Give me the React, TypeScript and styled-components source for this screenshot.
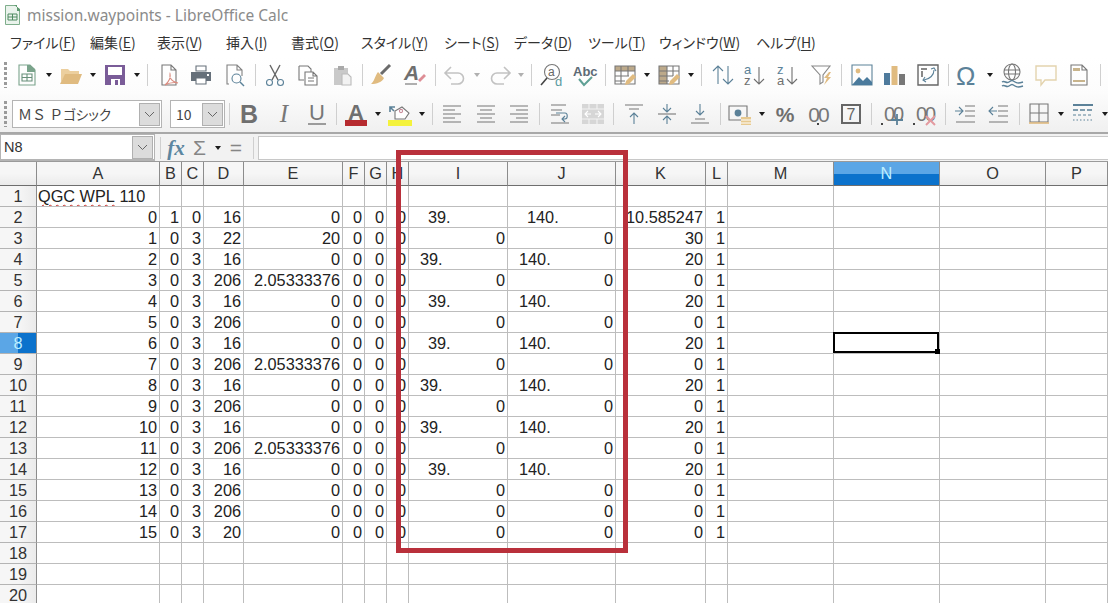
import React from 'react';
import styled, { createGlobalStyle } from 'styled-components';

const GlobalStyle = createGlobalStyle`
  html, body { margin: 0; padding: 0; background: #fff; overflow: hidden; }
  body { font-family: "Noto Sans", "Noto Sans CJK JP", sans-serif; }
`;

const Window = styled.div`
  position: relative;
  width: 1108px;
  height: 603px;
  display: flex;
  flex-direction: column;
  overflow: hidden;
  background: #fff;
`;

const TitleBar = styled.div`
  height: 30px;
  flex: none;
  display: flex;
  align-items: center;
  gap: 7px;
  padding-left: 5px;
  box-sizing: border-box;
  color: #8b8b8b;
  font-size: 15.5px;
`;

const MenuBar = styled.div`
  height: 27px;
  flex: none;
  display: flex;
  align-items: center;
  padding: 0 0 3px 10px;
  box-sizing: border-box;
  color: #333;
  font-family: "Noto Sans CJK JP", sans-serif;
  font-size: 14px;
  font-feature-settings: "palt";
`;

const MenuItem = styled.span<{ $w: number }>`
  width: ${(p) => p.$w}px;
  flex: none;
  white-space: nowrap;
  & u { text-underline-offset: 2px; }
`;

const Toolbar = styled.div<{ $h: number; $last?: boolean }>`
  height: ${(p) => p.$h}px;
  flex: none;
  display: flex;
  align-items: center;
  box-sizing: border-box;
  padding-top: ${(p) => (p.$last ? 3 : 0)}px;
  background: ${(p) => (p.$last ? 'linear-gradient(#fcfcfc, #f0f0f0)' : 'linear-gradient(#ffffff, #fcfcfc)')};
  border-bottom: ${(p) => (p.$last ? '2px solid #a8a8a8' : 'none')};
`;

const Slot = styled.div<{ $ml: number; $w: number }>`
  flex: none;
  margin-left: ${(p) => p.$ml}px;
  width: ${(p) => p.$w}px;
  display: flex;
  align-items: center;
  justify-content: center;
`;

const Grip = styled.div`
  width: 3px;
  height: 26px;
  background: repeating-linear-gradient(#9a9a9a 0 3px, transparent 3px 5px);
`;

const Sep = styled.div`
  width: 1px;
  height: 22px;
  background: #cfcfcf;
`;

const Arrow = styled.div<{ $off?: boolean }>`
  width: 0;
  height: 0;
  border-left: 3.5px solid transparent;
  border-right: 3.5px solid transparent;
  border-top: 4px solid ${(p) => (p.$off ? '#b0b0b0' : '#1c1c1c')};
`;

const Combo = styled.div<{ $w: number }>`
  width: ${(p) => p.$w}px;
  height: 28px;
  box-sizing: border-box;
  display: flex;
  align-items: center;
  padding: 1px 1px 1px 5px;
  background: #fff;
  border: 1px solid #b4b4b4;
  color: #444;
  font-family: "Noto Sans CJK JP", sans-serif;
  font-size: 14px;
  white-space: pre;
`;

const ComboText = styled.span`
  flex: 1;
  & b {
    font-weight: 400;
    font-size: 13.5px;
    font-feature-settings: "palt";
  }
`;

const ComboButton = styled.div`
  width: 21px;
  height: 23px;
  flex: none;
  display: flex;
  align-items: center;
  justify-content: center;
  background: #dcdcdc;
  border: 1px solid #b0b0b0;
  box-sizing: border-box;
`;

const FormulaBar = styled.div`
  height: 27px;
  flex: none;
  display: flex;
  align-items: stretch;
  background: #f2f2f2;
`;

const NameBox = styled.div`
  width: 155px;
  flex: none;
  box-sizing: border-box;
  display: flex;
  align-items: center;
  justify-content: space-between;
  padding: 1px 1px 1px 3px;
  background: #fff;
  border: 1px solid #b4b4b4;
  border-bottom-width: 2px;
  color: #333;
  font-family: "Liberation Sans", sans-serif;
  font-size: 14.5px;
`;

const FormulaTools = styled.div`
  width: 103px;
  flex: none;
  display: flex;
  align-items: center;
`;

const FormulaInput = styled.div`
  flex: 1;
  background: #fff;
  border: 1px solid #c8c8c8;
  border-right: none;
  margin: 2px 0 1px;
`;

const FxLabel = styled.span`
  color: #5c86a0;
  font-family: "Liberation Serif", serif;
  font-style: italic;
  font-weight: bold;
  font-size: 21px;
  line-height: 24px;
`;

const FormulaGlyph = styled.span`
  color: #858585;
  font-family: "Liberation Sans", sans-serif;
  font-size: 21px;
  line-height: 24px;
`;

const Sheet = styled.div`
  flex: none;
  display: grid;
  grid-template-columns: 37px 123px 22px 22px 40px 99px 22px 22px 22px 99px 108px 90px 22px 106px 106px 106px 62px;
  grid-template-rows: 24px repeat(20, 21px);
  border-top: 1px solid #9a9a9a;
  font-family: "Liberation Sans", sans-serif;
  font-size: 16.3px;
  color: #222;
`;

const ColHead = styled.div<{ $on?: boolean }>`
  display: flex;
  align-items: center;
  justify-content: center;
  box-sizing: border-box;
  color: ${(p) => (p.$on ? '#bdeeff' : '#333')};
  background: ${(p) => (p.$on
    ? 'linear-gradient(#5ba6e6 0 50%, #0b72cc 50% 100%)'
    : 'linear-gradient(#f6f6f6 0 50%, #ebebeb 100%)')};
  border-right: 1px solid #8c8c8c;
  border-bottom: 1px solid #6e6e6e;
`;

const RowHead = styled.div<{ $on?: boolean }>`
  display: flex;
  align-items: center;
  justify-content: center;
  box-sizing: border-box;
  color: ${(p) => (p.$on ? '#bdeeff' : '#333')};
  background: ${(p) => (p.$on
    ? 'linear-gradient(90deg, #5ba6e6 0 50%, #0b72cc 50% 100%)'
    : 'linear-gradient(90deg, #f6f6f6 0 50%, #ebebeb 100%)')};
  border-right: 1px solid #8c8c8c;
  border-bottom: 1px solid #b4b4b4;
`;

const Cell = styled.div<{ $left?: boolean; $pad?: number }>`
  box-sizing: border-box;
  display: flex;
  align-items: center;
  justify-content: ${(p) => (p.$left || p.$pad ? 'flex-start' : 'flex-end')};
  padding: 0 2px 0 ${(p) => p.$pad ?? 1}px;
  border-right: 1px solid #bdbdbd;
  border-bottom: 1px solid #bdbdbd;
  white-space: nowrap;
  overflow: hidden;
  & i {
    font-style: normal;
    text-decoration: underline wavy #c8322d 1px;
    text-underline-offset: 2px;
  }
`;

const ActiveCell = styled(Cell)`
  position: relative;
  overflow: visible;
  z-index: 1;
`;

const CellCursor = styled.div`
  position: absolute;
  left: -1px;
  top: -1px;
  right: 0;
  bottom: 0;
  border: 2px solid #000;
`;

const Handle = styled.div`
  position: absolute;
  right: -1px;
  bottom: -1px;
  width: 5px;
  height: 5px;
  background: #000;
`;

const RedFrame = styled.div`
  position: absolute;
  left: 396px;
  top: 150px;
  width: 232px;
  height: 403px;
  box-sizing: border-box;
  border: 5px solid #b9303b;
  pointer-events: none;
  z-index: 2;
`;

const BLUE = '#5b8198';
const GREY = '#6f6f6f';
const TAN = '#e0bb80';
const LINE = '#777';

const Svg: React.FC<{ children: React.ReactNode }> = ({ children }) => (
  <svg width={24} height={24} viewBox="0 0 24 24" fill="none" strokeWidth={1.1} overflow="visible">
    {children}
  </svg>
);

const lines = (rows: [number, number, number][], color = LINE) => (
  <path stroke={color} d={rows.map(([a, b, y]) => `M${a} ${y}H${b}`).join('')} />
);

const icons: Record<string, React.ReactNode> = {
  newSheet: (
    <Svg>
      <path d="M4 2h11l5 5v15H4z" stroke="#7aa38b" />
      <path d="M15 2h-3v7h8V6z" fill="#7aa38b" />
      <path d="M7 11h10v7H7zM7 14.5h10M12 11v7" stroke="#68907a" />
    </Svg>
  ),
  open: (
    <Svg>
      <path d="M2 19V6h7l2 2h9v3H7z" fill="#eccf9e" />
      <path d="M1 21l5-10h17l-4 10z" fill={TAN} />
    </Svg>
  ),
  save: (
    <Svg>
      <path d="M2 2h20v20H2z" fill="#7a5c98" />
      <path d="M5 4h14v8H5z" fill="#fff" />
      <path d="M8 16h9v6H8z" fill="#fff" />
      <path d="M12 17h3v5h-3z" fill="#7a5c98" />
    </Svg>
  ),
  pdf: (
    <Svg>
      <path d="M5 2h9l5 5v15H5zM14 2v5h5" stroke="#777" />
      <path d="M8 22c4-3 6-8 5-11-1 4 2 8 8 9-4-1-9 0-13 2z" stroke="#d98b7f" fill="#fff" />
    </Svg>
  ),
  print: (
    <Svg>
      <path d="M7 3h10v5H7z" stroke="#66707a" fill="#fff" />
      <path d="M2 9h20v9H2z" fill="#66707a" />
      <path d="M7 15h10v6H7z" fill="#fff" stroke="#66707a" />
      <path d="M18 11h2v2h-2z" fill="#fff" />
    </Svg>
  ),
  preview: (
    <Svg>
      <path d="M6 21H4V2h10l5 5v6M14 2v5h5" stroke="#808080" />
      <circle cx="13.5" cy="15.5" r="4.5" stroke={BLUE} />
      <path d="M17 19l4 4" stroke={BLUE} strokeWidth={1.5} />
    </Svg>
  ),
  cut: (
    <Svg>
      <path d="M7 2l8 15M17 2L9 17" stroke="#666" strokeWidth={1.4} />
      <circle cx="6.5" cy="19.5" r="3" stroke={BLUE} />
      <circle cx="17.5" cy="19.5" r="3" stroke={BLUE} />
    </Svg>
  ),
  copy: (
    <Svg>
      <path d="M3 3h9l3 3v3M3 3v14h5" stroke="#777" />
      <path d="M9 9h8l4 4v9H9zM17 9v4h4M12 15h6M12 18h6" stroke="#777" fill="#fff" />
    </Svg>
  ),
  paste: (
    <Svg>
      <path d="M4 5h14v17H4z" fill="#c9c9c9" />
      <path d="M8 3h6v4H8z" fill="#a9a9a9" />
      <path d="M12 11h6l3 3v8h-9z" fill="#f2f2f2" stroke="#bbb" />
    </Svg>
  ),
  brush: (
    <Svg>
      <path d="M21 2L12 11" stroke="#6b6b6b" strokeWidth={3} />
      <path d="M9 9l6 6c-2 4-7 6-13 6 3-2 4-8 7-12z" fill={TAN} />
    </Svg>
  ),
  clearFmt: (
    <Svg>
      <text x="1" y="17" fontFamily="Liberation Sans" fontStyle="italic" fontWeight="bold" fontSize="21" fill={GREY}>A</text>
      <path d="M2 21h12" stroke={GREY} />
      <path d="M15 17l6-6 2 2-6 6z" fill="#dd8d95" />
    </Svg>
  ),
  undo: (
    <Svg>
      <path d="M3 10h12a5.5 5.5 0 010 11H8M8 4l-6 6 6 6" stroke="#c2c2c2" strokeWidth={1.6} />
    </Svg>
  ),
  redo: (
    <Svg>
      <path d="M21 10H9a5.5 5.5 0 000 11h7M16 4l6 6-6 6" stroke="#c2c2c2" strokeWidth={1.6} />
    </Svg>
  ),
  find: (
    <Svg>
      <circle cx="12" cy="9" r="7.5" stroke="#777" />
      <text x="8" y="13" fontFamily="Liberation Sans" fontSize="12" fill="#666">a</text>
      <path d="M7 15l-6 7" stroke="#444" strokeWidth={1.6} />
      <text x="15" y="23" fontFamily="Liberation Sans" fontSize="13" fill="#5a9aa0">d</text>
    </Svg>
  ),
  abc: (
    <Svg>
      <text x="0" y="13" fontFamily="Liberation Sans" fontWeight="bold" fontSize="13" fill="#5d6a75">Abc</text>
      <path d="M6 16l5 6 8-8" stroke="#5fa095" strokeWidth={2} />
    </Svg>
  ),
  tableEdit: (
    <Svg>
      <path d="M2 3h20v5H2z" fill="#bca98a" />
      <path d="M2 3h20v18H2zM2 8h20M2 13h14M2 18h10M8 3v18M15 3v10" stroke="#777" />
      <path d="M12 22l1-4 7-7 3 3-7 7z" fill={TAN} />
    </Svg>
  ),
  colEdit: (
    <Svg>
      <path d="M2 3h8v18H2z" fill="#bca98a" />
      <path d="M2 3h20v18H2zM2 8h20M2 13h14M2 18h10M10 3v18M16 3v10" stroke="#777" />
      <path d="M12 22l1-4 7-7 3 3-7 7z" fill={TAN} />
    </Svg>
  ),
  sort: (
    <Svg>
      <path d="M7 21V3M2 8l5-5 5 5M17 3v18M12 16l5 5 5-5" stroke={BLUE} />
    </Svg>
  ),
  sortAz: (
    <Svg>
      <text fontFamily="Liberation Sans" fontSize="13">
        <tspan x="1" y="11" fill={BLUE}>a</tspan>
        <tspan x="1" y="22" fill={GREY}>z</tspan>
      </text>
      <path d="M16 21V4M11 16l5 5 5-5" stroke={GREY} />
    </Svg>
  ),
  sortZa: (
    <Svg>
      <text fontFamily="Liberation Sans" fontSize="13">
        <tspan x="1" y="11" fill={BLUE}>z</tspan>
        <tspan x="1" y="22" fill={GREY}>a</tspan>
      </text>
      <path d="M16 21V4M11 16l5 5 5-5" stroke={GREY} />
    </Svg>
  ),
  filter: (
    <Svg>
      <path d="M2 3h18l-7 9v7l-3 2v-9z" stroke="#888" />
      <path d="M19 9l-5 6h3l-3 7 7-8h-3l3-5z" fill={TAN} />
    </Svg>
  ),
  image: (
    <Svg>
      <path d="M2 2h20v20H2z" stroke={BLUE} />
      <circle cx="8" cy="8" r="2.4" fill={TAN} />
      <path d="M2 22l7-8 4 4 4-4 5 5v3z" fill="#4a7a9c" />
    </Svg>
  ),
  chart: (
    <Svg>
      <path d="M2 10h6v12H2z" fill="#4e7a9c" />
      <path d="M9.5 3h6v19h-6z" fill={TAN} />
      <path d="M17 11h6v11h-6z" fill="#777" />
    </Svg>
  ),
  pivot: (
    <Svg>
      <path d="M2 2h20v20H2z" stroke="#666" strokeWidth={1.4} />
      <path d="M5 5h6v2H5zM5 8h2v6H5z" fill="#888" />
      <path d="M18 7c0 5-4 9-10 10M15 6l3-1 2 3M9 14l-2 3 3 2" stroke={BLUE} />
    </Svg>
  ),
  omega: (
    <Svg>
      <text x="0" y="22" fontFamily="Liberation Sans" fontSize="26" fill={BLUE}>Ω</text>
    </Svg>
  ),
  link: (
    <Svg>
      <circle cx="11" cy="9" r="8" stroke="#777" />
      <ellipse cx="11" cy="9" rx="3.5" ry="8" stroke="#777" />
      <path d="M3 7h16M3 11h16" stroke="#777" />
      <path d="M1 19c3-2 4 2 7 0s3-2 6 0 5 1 8 0M1 23c3-2 4 2 7 0s3-2 6 0 5 1 8 0" stroke={BLUE} strokeWidth={1.5} />
    </Svg>
  ),
  comment: (
    <Svg>
      <path d="M2 3h20v14H11l-4 5v-5H2z" stroke="#e3d3ae" strokeWidth={1.4} />
    </Svg>
  ),
  header: (
    <Svg>
      <path d="M4 2h11l5 5v15H4zM15 2v5h5" stroke="#777" />
      <path d="M6 5h7v3H6z" fill="#c8b48c" />
      <path d="M6 17h12v2H6z" fill="#c8b48c" />
    </Svg>
  ),
  bold: (
    <Svg>
      <text x="12" y="21" textAnchor="middle" fontFamily="Liberation Sans" fontWeight="bold" fontSize="25" fill={GREY}>B</text>
    </Svg>
  ),
  italic: (
    <Svg>
      <text x="12" y="20" textAnchor="middle" fontFamily="Liberation Serif" fontStyle="italic" fontSize="25" fill="#777">I</text>
    </Svg>
  ),
  underline: (
    <Svg>
      <text x="12" y="18" textAnchor="middle" fontFamily="Liberation Sans" fontSize="22" fill="#777">U</text>
      <path d="M3 22h18" stroke="#555" />
    </Svg>
  ),
  fontColor: (
    <Svg>
      <text x="12" y="18" textAnchor="middle" fontFamily="Liberation Sans" fontWeight="bold" fontSize="22" fill={GREY}>A</text>
      <path d="M1 18h22v6H1z" fill="#b62b2f" />
    </Svg>
  ),
  bgColor: (
    <Svg>
      <path d="M7 17V9l7-4 7 6-4 6z" stroke="#777" fill="#fff" />
      <path d="M2 10V5h5M2 5l4 4" stroke={BLUE} strokeWidth={1.6} />
      <circle cx="13" cy="9" r="1.6" stroke="#c98b9a" />
      <path d="M0 18h24v6H0z" fill="#f4f23c" />
    </Svg>
  ),
  alignLeft: <Svg>{lines([[3, 21, 4], [3, 15, 8], [3, 21, 12], [3, 15, 16], [3, 21, 20]])}</Svg>,
  alignCenter: <Svg>{lines([[3, 21, 4], [6, 18, 8], [3, 21, 12], [6, 18, 16], [3, 21, 20]])}</Svg>,
  alignRight: <Svg>{lines([[3, 21, 4], [9, 21, 8], [3, 21, 12], [9, 21, 16], [3, 21, 20]])}</Svg>,
  wrap: (
    <Svg>
      {lines([[3, 18, 3], [3, 14, 8], [3, 12, 13], [3, 21, 21]])}
      <path d="M8 11h9c3 0 3 6 0 6h-3M17 14l-3 3 3 3" stroke={BLUE} />
    </Svg>
  ),
  merge: (
    <Svg>
      <path d="M1 2h22v20H1z" fill="#d6d6d6" />
      <path d="M1 7h22M1 17h22M8 2v5M16 2v5M8 17v5M16 17v5" stroke="#f2f2f2" />
      <path d="M4 12h6M7 9l-3 3 3 3M20 12h-6M17 9l3 3-3 3" stroke="#fff" />
    </Svg>
  ),
  vTop: (
    <Svg>
      {lines([[3, 21, 3], [7, 17, 7]])}
      <path d="M12 22V11M8 15l4-4 4 4" stroke={BLUE} />
    </Svg>
  ),
  vMid: (
    <Svg>
      {lines([[3, 21, 12]])}
      <path d="M12 2v8M8 6l4 4 4-4M12 22v-8M8 18l4-4 4 4" stroke={BLUE} />
    </Svg>
  ),
  vBottom: (
    <Svg>
      {lines([[3, 21, 21], [7, 17, 17]])}
      <path d="M12 2v11M8 9l4 4 4-4" stroke={BLUE} />
    </Svg>
  ),
  currency: (
    <Svg>
      <path d="M1 4h18v14H1z" stroke="#777" />
      <circle cx="10" cy="11" r="3.4" fill={BLUE} />
      <path d="M13 15h10v8H13z" fill="#e7c98f" />
      <path d="M13 18h10M13 21h10" stroke="#fff" />
    </Svg>
  ),
  percent: (
    <Svg>
      <text x="12" y="20" textAnchor="middle" fontFamily="Liberation Sans" fontWeight="bold" fontSize="21" fill={GREY}>%</text>
    </Svg>
  ),
  decimal: (
    <Svg>
      <text x="12" y="20" textAnchor="middle" fontFamily="Liberation Sans" fontSize="21" letterSpacing="-2" fill="#777">00</text>
      <path d="M11 21h2v2h-2z" fill="#444" />
    </Svg>
  ),
  seven: (
    <Svg>
      <path d="M3 3h18v18H3z" stroke="#666" strokeWidth={2} />
      <text x="12" y="18" textAnchor="middle" fontFamily="Liberation Sans" fontSize="16" fill="#666">7</text>
    </Svg>
  ),
  addDec: (
    <Svg>
      <text x="13" y="19" textAnchor="middle" fontFamily="Liberation Sans" fontSize="20" letterSpacing="-2" fill="#777">00</text>
      <path d="M1 21h2v2H1z" fill="#444" />
      <path d="M17 12v11M11 18h12" stroke={BLUE} strokeWidth={1.8} />
    </Svg>
  ),
  delDec: (
    <Svg>
      <text x="12" y="19" textAnchor="middle" fontFamily="Liberation Sans" fontSize="20" letterSpacing="-2" fill="#777">00</text>
      <path d="M0 21h2v2H0z" fill="#444" />
      <path d="M13 14l9 9M22 14l-9 9" stroke="#e39aa0" strokeWidth={2} />
    </Svg>
  ),
  indent: (
    <Svg>
      {lines([[12, 22, 4], [12, 22, 9], [12, 22, 14], [3, 22, 20]])}
      <path d="M2 9h8M6 5l4 4-4 4" stroke={BLUE} />
    </Svg>
  ),
  outdent: (
    <Svg>
      {lines([[12, 22, 4], [12, 22, 9], [12, 22, 14], [3, 22, 20]])}
      <path d="M11 9H3M7 5L3 9l4 4" stroke={BLUE} />
    </Svg>
  ),
  borders: (
    <Svg>
      <path d="M3 2h18v18H3zM12 2v18M3 11h18" stroke="#777" />
      <path d="M2 21h20" stroke={TAN} strokeWidth={1.6} />
    </Svg>
  ),
  borderStyle: (
    <Svg>
      <path d="M2 3h20" stroke={BLUE} strokeWidth={2} />
      <path d="M2 8h20" stroke={BLUE} strokeWidth={1.4} strokeDasharray="5 2" />
      <path d="M2 13h20" stroke={BLUE} strokeWidth={1.2} strokeDasharray="3 2" />
      <path d="M2 18h20" stroke={BLUE} strokeWidth={1.2} strokeDasharray="1.5 2" />
    </Svg>
  ),
};

const Chevron = () => (
  <svg width="11" height="7" viewBox="0 0 11 7" fill="none">
    <path d="M1 1l4.5 4.5L10 1" stroke="#666" />
  </svg>
);

type Item =
  | { kind: 'grip' | 'sep' | 'arrow' | 'off'; at: number }
  | { kind: 'icon'; at: number; name: string }
  | { kind: 'combo'; at: number; w: number; text: React.ReactNode };

const itemWidth = (i: Item) => {
  if (i.kind === 'icon') return 24;
  if (i.kind === 'combo') return i.w;
  if (i.kind === 'grip') return 3;
  if (i.kind === 'sep') return 1;
  return 7;
};

const icon = (at: number, name: string): Item => ({ kind: 'icon', at, name });
const arrow = (at: number): Item => ({ kind: 'arrow', at });
const off = (at: number): Item => ({ kind: 'off', at });
const sep = (at: number): Item => ({ kind: 'sep', at });
const grip = (at: number): Item => ({ kind: 'grip', at });

const topTools: Item[] = [
  grip(5), icon(27, 'newSheet'), arrow(49), icon(71, 'open'), arrow(93), icon(115, 'save'), arrow(137), sep(147),
  icon(169, 'pdf'), icon(201, 'print'), icon(235, 'preview'), sep(255),
  icon(275, 'cut'), icon(308, 'copy'), icon(342, 'paste'), sep(362),
  icon(381, 'brush'), icon(415, 'clearFmt'), sep(435),
  icon(455, 'undo'), off(477), icon(500, 'redo'), off(521), sep(531),
  icon(552, 'find'), icon(585, 'abc'), sep(605),
  icon(625, 'tableEdit'), arrow(647), icon(669, 'colEdit'), arrow(691), sep(701),
  icon(723, 'sort'), icon(755, 'sortAz'), icon(788, 'sortZa'), icon(822, 'filter'), sep(841),
  icon(862, 'image'), icon(894, 'chart'), icon(928, 'pivot'), sep(948),
  icon(968, 'omega'), arrow(990), icon(1013, 'link'), icon(1046, 'comment'), icon(1079, 'header'), sep(1100),
];

const formatTools: Item[] = [
  grip(5),
  { kind: 'combo', at: 87, w: 150, text: <>ＭＳ Ｐ<b>ゴシック</b></> },
  { kind: 'combo', at: 197.5, w: 55, text: '10' },
  sep(229),
  icon(249, 'bold'), icon(284, 'italic'), icon(317, 'underline'), sep(336),
  icon(356, 'fontColor'), arrow(378), icon(400, 'bgColor'), arrow(422), sep(432),
  icon(452, 'alignLeft'), icon(486, 'alignCenter'), icon(519, 'alignRight'), sep(539),
  icon(560, 'wrap'), icon(593, 'merge'), sep(613),
  icon(634, 'vTop'), icon(667, 'vMid'), icon(700, 'vBottom'), sep(720),
  icon(740, 'currency'), arrow(762), icon(785, 'percent'), icon(818, 'decimal'), icon(851, 'seven'), sep(871),
  icon(892, 'addDec'), icon(925, 'delDec'), sep(945),
  icon(965, 'indent'), icon(998, 'outdent'), sep(1019),
  icon(1039, 'borders'), arrow(1061), icon(1083, 'borderStyle'), arrow(1105),
];

const ToolRow: React.FC<{ items: Item[]; h: number; last?: boolean }> = ({ items, h, last }) => {
  let end = 0;
  return (
    <Toolbar $h={h} $last={last}>
      {items.map((item) => {
        const w = itemWidth(item);
        const ml = item.at - w / 2 - end;
        end = item.at + w / 2;
        return (
          <Slot key={item.at} $ml={ml} $w={w}>
            {item.kind === 'icon' && icons[item.name]}
            {item.kind === 'arrow' && <Arrow />}
            {item.kind === 'off' && <Arrow $off />}
            {item.kind === 'sep' && <Sep />}
            {item.kind === 'grip' && <Grip />}
            {item.kind === 'combo' && (
              <Combo $w={item.w}>
                <ComboText>{item.text}</ComboText>
                <ComboButton><Chevron /></ComboButton>
              </Combo>
            )}
          </Slot>
        );
      })}
    </Toolbar>
  );
};

const menus: [string, string, number][] = [
  ['ファイル', 'F', 80], ['編集', 'E', 67], ['表示', 'V', 69], ['挿入', 'I', 65], ['書式', 'O', 70],
  ['スタイル', 'Y', 83], ['シート', 'S', 70], ['データ', 'D', 74], ['ツール', 'T', 71], ['ウィンドウ', 'W', 97], ['ヘルプ', 'H', 80],
];

const columns = ['A', 'B', 'C', 'D', 'E', 'F', 'G', 'H', 'I', 'J', 'K', 'L', 'M', 'N', 'O', 'P'];

const E = '2.05333376';
// A..H values of rows 2-17, then I, J, K, L
const rows: string[][] = [
  ['0', '1', '0', '16', '0', '0', '0', '0', '39.', '140.', '10.585247', '1'],
  ['1', '0', '3', '22', '20', '0', '0', '0', '0', '0', '30', '1'],
  ['2', '0', '3', '16', '0', '0', '0', '0', '39.', '140.', '20', '1'],
  ['3', '0', '3', '206', E, '0', '0', '0', '0', '0', '0', '1'],
  ['4', '0', '3', '16', '0', '0', '0', '0', '39.', '140.', '20', '1'],
  ['5', '0', '3', '206', '0', '0', '0', '0', '0', '0', '0', '1'],
  ['6', '0', '3', '16', '0', '0', '0', '0', '39.', '140.', '20', '1'],
  ['7', '0', '3', '206', E, '0', '0', '0', '0', '0', '0', '1'],
  ['8', '0', '3', '16', '0', '0', '0', '0', '39.', '140.', '20', '1'],
  ['9', '0', '3', '206', '0', '0', '0', '0', '0', '0', '0', '1'],
  ['10', '0', '3', '16', '0', '0', '0', '0', '39.', '140.', '20', '1'],
  ['11', '0', '3', '206', E, '0', '0', '0', '0', '0', '0', '1'],
  ['12', '0', '3', '16', '0', '0', '0', '0', '39.', '140.', '20', '1'],
  ['13', '0', '3', '206', '0', '0', '0', '0', '0', '0', '0', '1'],
  ['14', '0', '3', '206', '0', '0', '0', '0', '0', '0', '0', '1'],
  ['15', '0', '3', '20', '0', '0', '0', '0', '0', '0', '0', '1'],
];

// left padding of the partly blanked coordinates in I and J, by sheet row
const wideI = [2, 6, 8, 14];
const wideJ = [2];

const cellPad = (rowNo: number, value: string) => {
  if (value === '39.') return wideI.includes(rowNo) ? 19 : 11;
  if (value === '140.') return wideJ.includes(rowNo) ? 19 : 11;
  return undefined;
};

const App: React.FC = () => (
  <Window>
    <GlobalStyle />
    <TitleBar>
      <svg width="15" height="20" viewBox="0 0 15 20" fill="none">
        <path d="M.5.5h10l4 4v15H.5z" fill="#eaf3ec" stroke="#7fae8c" />
        <path d="M9 0h3v6h3v-2z" fill="#5f9a70" />
        <path d="M3 9h9v6H3zM3 12h9M7.5 9v6" stroke="#4f8a60" />
      </svg>
      mission.waypoints - LibreOffice Calc
    </TitleBar>
    <MenuBar>
      {menus.map(([label, key, w]) => (
        <MenuItem key={key} $w={w}>{label}(<u>{key}</u>)</MenuItem>
      ))}
    </MenuBar>
    <ToolRow items={topTools} h={36} />
    <ToolRow items={formatTools} h={41} last />
    <FormulaBar>
      <NameBox>
        N8
        <ComboButton><Chevron /></ComboButton>
      </NameBox>
      <FormulaTools>
        <Slot $ml={5} $w={1}><Sep /></Slot>
        <Slot $ml={7} $w={16}><FxLabel>fx</FxLabel></Slot>
        <Slot $ml={9} $w={13}><FormulaGlyph>Σ</FormulaGlyph></Slot>
        <Slot $ml={8.5} $w={7}><Arrow /></Slot>
        <Slot $ml={7.5} $w={14}><FormulaGlyph>=</FormulaGlyph></Slot>
        <Slot $ml={10} $w={1}><Sep /></Slot>
      </FormulaTools>
      <FormulaInput />
    </FormulaBar>
    <Sheet>
      <ColHead />
      {columns.map((c) => <ColHead key={c} $on={c === 'N'}>{c}</ColHead>)}
      {Array.from({ length: 20 }, (_, r) => {
        const rowNo = r + 1;
        const values = r >= 1 && r <= 16 ? rows[r - 1] : [];
        return (
          <React.Fragment key={rowNo}>
            <RowHead $on={rowNo === 8}>{rowNo}</RowHead>
            {columns.map((c, i) => {
              if (rowNo === 1 && c === 'A') {
                return <Cell key={c} $left><i>QGC WPL</i>&nbsp;110</Cell>;
              }
              if (rowNo === 8 && c === 'N') {
                return <ActiveCell key={c}><CellCursor /><Handle /></ActiveCell>;
              }
              const value = values[i] ?? '';
              return <Cell key={c} $pad={cellPad(rowNo, value)}>{value}</Cell>;
            })}
          </React.Fragment>
        );
      })}
    </Sheet>
    <RedFrame />
  </Window>
);

export default App;
